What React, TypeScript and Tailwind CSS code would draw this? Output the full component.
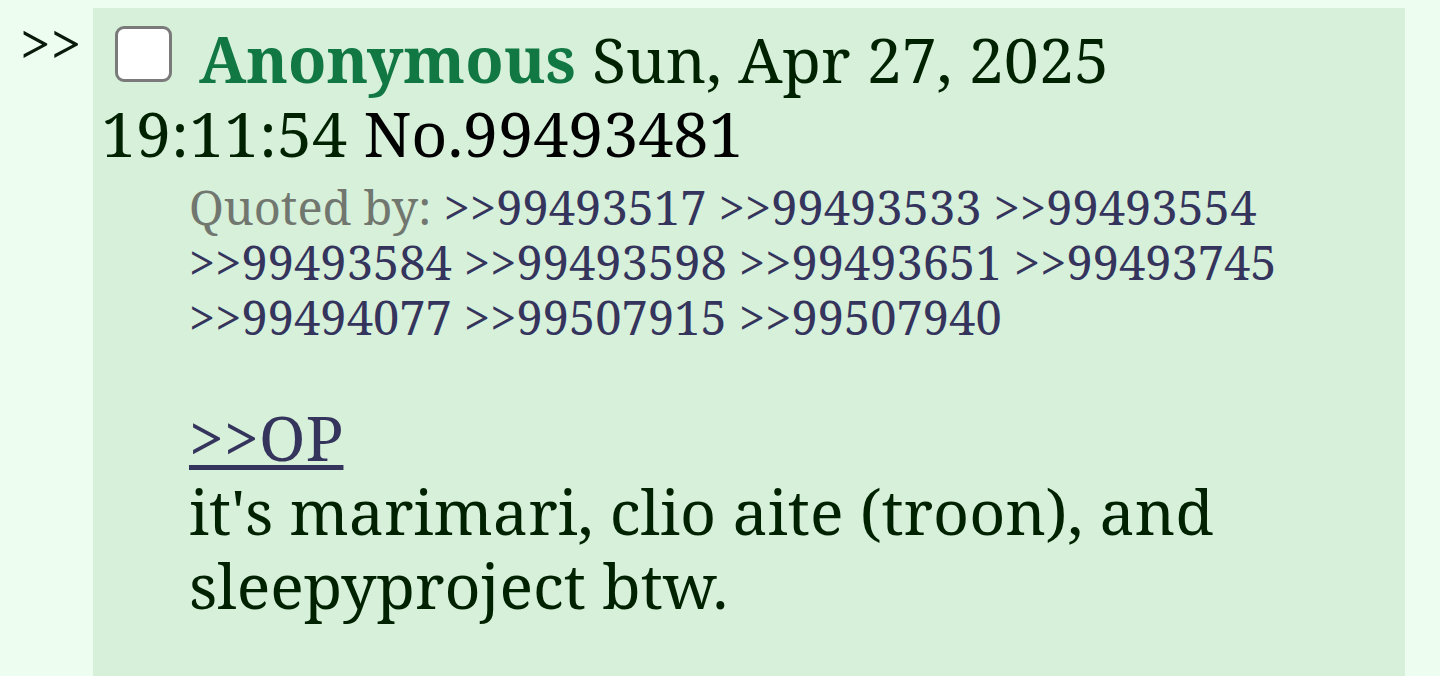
import React from "react";

const quotedRows = [
  ["99493517", "99493533", "99493554"],
  ["99493584", "99493598", "99493651", "99493745"],
  ["99494077", "99507915", "99507940"],
];

export default function App() {
  return (
    <div className="min-h-screen w-full bg-[#edfef1] flex items-start pt-2 font-['Noto_Serif',serif] overflow-hidden">
      <div className="w-[93px] h-[60px] shrink-0 pl-[20px] pt-[7px] text-[55px] leading-none text-[#0a1a0a]">
        &gt;&gt;
      </div>
      <div className="w-[1312px] min-h-[668px] shrink-0 bg-[#d6f0da] pl-2 pt-[14px]">
        <div className="text-[62.7px] leading-[74px] text-[#002200]">
          <span className="inline-block w-[57px] h-[56px] ml-[14px] mr-[27px] mb-[1px] rounded-[9px] border-[3px] border-[#7a7a7a] bg-white align-baseline" />
          <span className="font-bold text-[#117743]">Anonymous</span> Sun, Apr 27, 2025
          <br />
          19:11:54 <span className="text-black">No.99493481</span>
        </div>
        <div className="mt-[10px] ml-[88px] text-[47px] leading-[55px] text-[#34345c] whitespace-nowrap">
          {quotedRows.map((row, i) => (
            <div key={i}>
              {i === 0 && <span className="text-[#71776f]">Quoted by: </span>}
              {row.map((n, j) => (
                <span key={n}>
                  {j > 0 ? " " : ""}&gt;&gt;{n}
                </span>
              ))}
            </div>
          ))}
        </div>
        <div className="mt-[55px] ml-[88px] text-[62.7px] leading-[74px] text-[#002200]">
          <span className="text-[#34345c] underline decoration-[length:5px] underline-offset-[4px]">&gt;&gt;OP</span>
          <br />
          it's marimari, clio aite (troon), and
          <br />
          sleepyproject btw.
        </div>
      </div>
    </div>
  );
}
